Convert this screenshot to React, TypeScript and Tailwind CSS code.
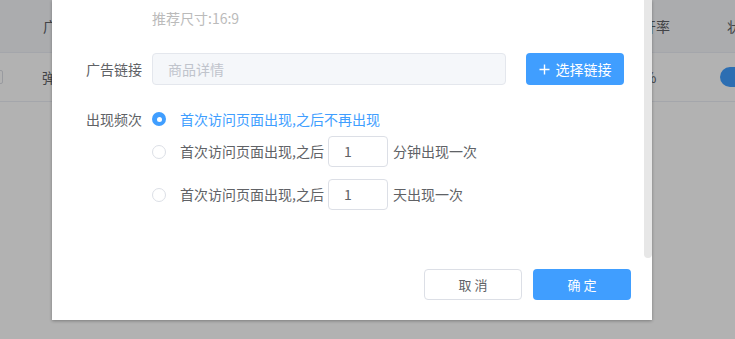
import React from 'react';

const font = { fontFamily: '"Noto Sans CJK SC", "Noto Sans", sans-serif' };

function Radio({ checked }: { checked?: boolean }) {
  return checked ? (
    <span className="w-[14px] h-[14px] rounded-full bg-[#409eff] flex items-center justify-center flex-shrink-0">
      <span className="w-[5px] h-[5px] rounded-full bg-white"></span>
    </span>
  ) : (
    <span className="w-[14px] h-[14px] rounded-full border border-[#dcdfe6] bg-white flex-shrink-0"></span>
  );
}

function NumInput() {
  return (
    <div className="w-[60px] h-[31px] border border-[#dcdfe6] rounded-[4px] bg-white flex items-center px-[15px] text-[#606266]">
      1
    </div>
  );
}

export default function App() {
  return (
    <div className="relative w-[735px] h-[339px] overflow-hidden bg-white text-[14px]" style={font}>
      {/* Page table behind */}
      <div className="text-[#606266] whitespace-nowrap">
        <div className="flex items-center h-[53px] bg-[#f5f7fa] border-b border-[#ebeef5]">
          <div className="w-[43px] flex-shrink-0"></div>
          <div className="w-[585px] flex-shrink-0">广告名称</div>
          <div className="w-[99px] flex-shrink-0">打开率</div>
          <div className="flex-shrink-0">状态</div>
        </div>
        <div className="flex items-center h-[49px] border-b border-[#ebeef5]">
          <div className="w-[42px] flex flex-shrink-0">
            <span className="w-[14px] h-[14px] -ml-[11px] border border-[#dcdfe6] rounded-[2px] bg-white"></span>
          </div>
          <div className="w-[586px] flex-shrink-0">弹窗广告</div>
          <div className="w-[92px] flex-shrink-0">10%</div>
          <div className="w-[40px] h-[20px] rounded-full bg-[#409eff] flex-shrink-0"></div>
        </div>
      </div>

      {/* Mask */}
      <div className="absolute inset-0 bg-black/30"></div>

      {/* Dialog */}
      <div className="absolute left-[52px] top-0 w-[600px] h-[320px] bg-white shadow-[0_1px_3px_rgba(0,0,0,0.3)] flex flex-col">
        <div className="absolute right-0 top-0 w-[8px] h-[258px] rounded-b-[4px] bg-[#e7e7e7]"></div>

        <div className="pt-[8px] pl-[100px] leading-[20px] text-[#bbbbbb]">推荐尺寸:16:9</div>

        <div className="flex items-center h-[32px] mt-[25px]">
          <div className="w-[100px] pr-[10px] text-right text-[#606266]">广告链接</div>
          <div className="w-[354px] h-[32px] rounded-[4px] border border-[#e4e7ed] bg-[#f5f7fa] px-[15px] flex items-center text-[#c0c4cc]">
            商品详情
          </div>
          <button className="ml-[20px] w-[98px] h-[32px] rounded-[4px] bg-[#409eff] text-white flex items-center justify-center gap-[6px]">
            <svg width="11" height="11" viewBox="0 0 11 11" fill="none" stroke="white" strokeWidth="1.4">
              <path d="M5.5 0.5v10M0.5 5.5h10" />
            </svg>
            选择链接
          </button>
        </div>

        <div className="flex items-start mt-[24px]">
          <div className="w-[100px] pr-[10px] text-right leading-[20px] text-[#606266]">出现频次</div>
          <div className="flex flex-col">
            <div className="flex items-center h-[20px] gap-[14px] text-[#409eff]">
              <Radio checked />
              <span>首次访问页面出现,之后不再出现</span>
            </div>
            <div className="flex items-center h-[31px] mt-[7px] text-[#606266]">
              <Radio />
              <span className="ml-[14px] mr-[4px]">首次访问页面出现,之后</span>
              <NumInput />
              <span className="ml-[5px]">分钟出现一次</span>
            </div>
            <div className="flex items-center h-[31px] mt-[12px] text-[#606266]">
              <Radio />
              <span className="ml-[14px] mr-[4px]">首次访问页面出现,之后</span>
              <NumInput />
              <span className="ml-[5px]">天出现一次</span>
            </div>
          </div>
        </div>

        <div className="mt-auto flex justify-end gap-[11px] pr-[21px] pb-[20px]">
          <button className="w-[98px] h-[31px] rounded-[4px] border border-[#dcdfe6] bg-white text-[13px] text-[#606266] tracking-[3px] pl-[3px]">
            取消
          </button>
          <button className="w-[98px] h-[31px] rounded-[4px] bg-[#409eff] text-[13px] text-white tracking-[3px] pl-[3px]">
            确定
          </button>
        </div>
      </div>
    </div>
  );
}
